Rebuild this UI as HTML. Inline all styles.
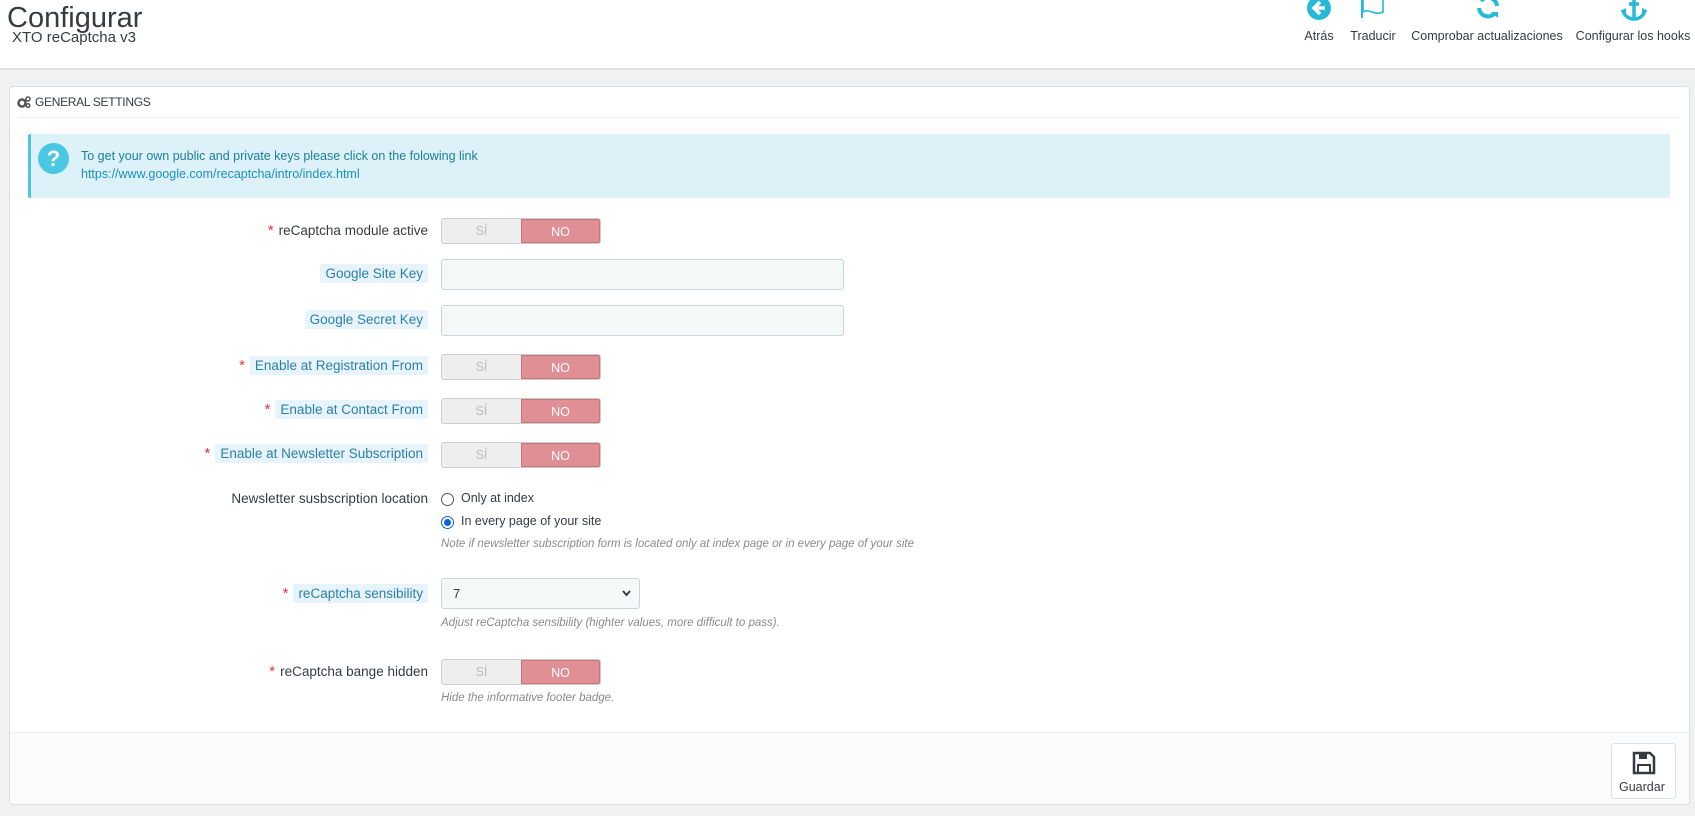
<!DOCTYPE html>
<html><head><meta charset="utf-8"><style>
*{box-sizing:border-box;margin:0;padding:0}
body{width:1695px;height:816px;background:#eff1f2;font-family:"Liberation Sans",sans-serif;color:#363a41;position:relative;overflow:hidden;font-size:13px}
.abs{position:absolute}
#hdr{left:0;top:0;width:1695px;height:70px;background:#fff;border-bottom:2px solid #dfe1e3}
.tb{position:absolute;top:29px;font-size:12.5px;color:#363a41;white-space:nowrap;transform:translateX(-50%)}
#panel{left:9px;top:86px;width:1681px;height:719px;background:#fff;border:1px solid #dbe0e3;border-radius:4px}
.lbl{position:absolute;right:1267px;font-size:13.5px;color:#363a41;white-space:nowrap;text-align:right}
.hl{background:#e8f4fb;color:#2b7fa8;padding:2px 5px;border-radius:2px}
.star{color:#e33;margin-right:5px;font-size:15px}
.tg{position:absolute;left:441px;width:160px;height:26px;border:1px solid #ccc;border-radius:3px;overflow:hidden;display:flex;font-size:12.5px}
.tg .s{width:80px;background:#eee;color:#bbb;text-align:center;line-height:24px}
.tg .n{width:80px;background:#e08f95;color:#fff;text-align:center;line-height:24px;border:1px solid #c5767c}
.inp{position:absolute;left:441px;width:403px;height:31px;background:#f5f8f9;border:1px solid #c7d6db;border-radius:3px}
.help{position:absolute;left:441px;font-size:11.5px;font-style:italic;color:#8a8a8a;white-space:nowrap}
</style></head><body>
<div id="hdr" class="abs">
 <div class="abs" style="left:7px;top:2px;font-size:29px;color:#363a41">Configurar</div>
 <div class="abs" style="left:12px;top:29px;font-size:15px;color:#363a41">XTO reCaptcha v3</div>
 <svg class="abs" style="left:1307px;top:-4px" width="24" height="24" viewBox="0 0 24 24"><circle cx="12" cy="12" r="12" fill="#25b9d7"/><path d="M13 6l-6 6 6 6M7 12h11" stroke="#fff" stroke-width="3.5" fill="none"/></svg>
 <svg class="abs" style="left:1360px;top:-6px" width="26" height="24" viewBox="0 0 26 24"><path d="M2 0v24" stroke="#25b9d7" stroke-width="2"/><path d="M3 4c6-4 10 4 20 0v14c-8 4-14-4-20 0z" stroke="#25b9d7" stroke-width="1.6" fill="none"/></svg>
 <svg class="abs" style="left:1475px;top:-6px" width="26" height="26" viewBox="0 0 26 26"><path d="M4 14a9 9 0 0 0 16 5M22 12A9 9 0 0 0 6 7" stroke="#25b9d7" stroke-width="4" fill="none"/><path d="M16 18l7 0 0 6z" fill="#25b9d7"/></svg>
 <svg class="abs" style="left:1620px;top:-4px" width="28" height="26" viewBox="0 0 28 26"><path d="M14 2v20M9 8h10M3 14c1 6 6 9 11 9s10-3 11-9" stroke="#25b9d7" stroke-width="3.5" fill="none"/><path d="M0 15l6-3 0 5zM28 15l-6-3 0 5z" fill="#25b9d7"/></svg>
 <div class="tb" style="left:1319px">Atrás</div>
 <div class="tb" style="left:1373px">Traducir</div>
 <div class="tb" style="left:1487px">Comprobar actualizaciones</div>
 <div class="tb" style="left:1633px">Configurar los hooks</div>
</div>
<div id="panel" class="abs"></div>
<svg class="abs" style="left:17px;top:96px" width="14" height="12" viewBox="0 0 14 12"><circle cx="5" cy="7" r="3.5" fill="none" stroke="#555" stroke-width="2.5"/><circle cx="11" cy="3" r="2" fill="none" stroke="#555" stroke-width="1.5"/><circle cx="11" cy="9.5" r="1.8" fill="none" stroke="#555" stroke-width="1.5"/></svg>
<div class="abs" style="left:35px;top:95px;font-size:12px;color:#363a41;letter-spacing:-.3px">GENERAL SETTINGS</div>
<div class="abs" style="left:19px;top:117px;width:1661px;height:1px;background:#eee"></div>
<div class="abs" style="left:28px;top:134px;width:1642px;height:64px;background:#dcf2f8;border-left:3px solid #4ac7e3;border-radius:2px"></div>
<svg class="abs" style="left:38px;top:143px" width="31" height="31" viewBox="0 0 31 31"><circle cx="15.5" cy="15.5" r="15.5" fill="#4ac7e3"/><text x="15.5" y="23" text-anchor="middle" font-family="Liberation Sans" font-weight="bold" font-size="22" fill="#fff">?</text></svg>
<div class="abs" style="left:81px;top:149px;font-size:12.5px;color:#1e7e9a">To get your own public and private keys please click on the folowing link</div>
<div class="abs" style="left:81px;top:167px;font-size:12.5px;color:#1c8fbf">https://www.google.com/recaptcha/intro/index.html</div>

<div class="lbl" style="top:222px"><span class="star">*</span>reCaptcha module active</div>
<div class="tg" style="top:218px"><div class="s">SÍ</div><div class="n">NO</div></div>

<div class="lbl" style="top:266px"><span class="hl">Google Site Key</span></div>
<div class="inp" style="top:259px"></div>
<div class="lbl" style="top:312px"><span class="hl">Google Secret Key</span></div>
<div class="inp" style="top:305px"></div>

<div class="lbl" style="top:357px"><span class="star">*</span><span class="hl">Enable at Registration From</span></div>
<div class="tg" style="top:354px"><div class="s">SÍ</div><div class="n">NO</div></div>
<div class="lbl" style="top:401px"><span class="star">*</span><span class="hl">Enable at Contact From</span></div>
<div class="tg" style="top:398px"><div class="s">SÍ</div><div class="n">NO</div></div>
<div class="lbl" style="top:445px"><span class="star">*</span><span class="hl">Enable at Newsletter Subscription</span></div>
<div class="tg" style="top:442px"><div class="s">SÍ</div><div class="n">NO</div></div>

<div class="lbl" style="top:491px">Newsletter susbscription location</div>
<div class="abs" style="left:441px;top:493px;width:13px;height:13px;border:1px solid #555;border-radius:50%"></div>
<div class="abs" style="left:461px;top:491px;font-size:12.5px">Only at index</div>
<div class="abs" style="left:441px;top:516px;width:13px;height:13px;border:1px solid #0a66d8;border-radius:50%;background:#fff"><div style="margin:2px;width:7px;height:7px;border-radius:50%;background:#0a66d8"></div></div>
<div class="abs" style="left:461px;top:514px;font-size:12.5px">In every page of your site</div>
<div class="help" style="top:538px">Note if newsletter subscription form is located only at index page or in every page of your site</div>

<div class="lbl" style="top:585px"><span class="star">*</span><span class="hl">reCaptcha sensibility</span></div>
<div class="abs" style="left:441px;top:578px;width:199px;height:31px;background:#f5f8f9;border:1px solid #c7d6db;border-radius:3px;padding:7px 11px;font-size:13px">7<svg style="position:absolute;right:8px;top:11px" width="9" height="7" viewBox="0 0 9 7"><path d="M1 1l3.5 4 3.5-4" stroke="#333" stroke-width="1.8" fill="none"/></svg></div>
<div class="help" style="top:617px">Adjust reCaptcha sensibility (highter values, more difficult to pass).</div>

<div class="lbl" style="top:663px"><span class="star">*</span>reCaptcha bange hidden</div>
<div class="tg" style="top:659px"><div class="s">SÍ</div><div class="n">NO</div></div>
<div class="help" style="top:692px">Hide the informative footer badge.</div>

<div class="abs" style="left:10px;top:732px;width:1679px;height:72px;background:#fafbfc;border-top:1px solid #eee;border-radius:0 0 4px 4px"></div>
<div class="abs" style="left:1611px;top:743px;width:65px;height:56px;background:#fff;border:1px solid #dbe0e3;border-radius:3px"></div>
<svg class="abs" style="left:1632px;top:751px" width="24" height="24" viewBox="0 0 24 24"><path d="M2 2h16l4 4v16H2z" fill="none" stroke="#363a41" stroke-width="2.5"/><path d="M7 3h8v5H7z" fill="#363a41"/><path d="M6 14h12v8H6z" fill="none" stroke="#363a41" stroke-width="2"/></svg>
<div class="abs" style="left:1619px;top:780px;font-size:12.5px;color:#363a41">Guardar</div>
</body></html>
